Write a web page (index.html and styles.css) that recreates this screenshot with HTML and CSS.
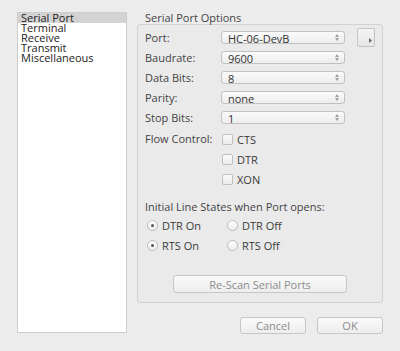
FILE: index.html
```html
<!DOCTYPE html>
<html lang="en">
<head>
    <meta charset="UTF-8">
    <meta name="viewport" content="width=device-width, initial-scale=1.0">
    <link rel="stylesheet" href="styles.css">
    <title>Serial Port Options</title>
</head>
<body>
    <div id="dialog">
        <ul id="pages">
            <li class="selected">Serial Port</li>
            <li>Terminal</li>
            <li>Receive</li>
            <li>Transmit</li>
            <li>Miscellaneous</li>
        </ul>

        <div id="options">
            <div class="title">Serial Port Options</div>
            <div class="group">
                <div class="fields">
                    <label>Port:</label>
                    <div class="select">HC-06-DevB<span class="arrows"></span></div>
                    <button class="tinyBtn"><svg width="3" height="5" viewBox="0 0 3 5"><path d="M0 0 L3 2.5 L0 5 Z" fill="#666"/></svg></button>

                    <label>Baudrate:</label>
                    <div class="select">9600<span class="arrows"></span></div>
                    <span></span>

                    <label>Data Bits:</label>
                    <div class="select">8<span class="arrows"></span></div>
                    <span></span>

                    <label>Parity:</label>
                    <div class="select">none<span class="arrows"></span></div>
                    <span></span>

                    <label>Stop Bits:</label>
                    <div class="select">1<span class="arrows"></span></div>
                    <span></span>
                </div>

                <div class="flow">
                    <label>Flow Control:</label>
                    <div class="checks">
                        <div class="check"><span class="box"></span>CTS</div>
                        <div class="check"><span class="box"></span>DTR</div>
                        <div class="check"><span class="box"></span>XON</div>
                    </div>
                </div>

                <div class="subtitle">Initial Line States when Port opens:</div>
                <div class="radios">
                    <div class="radio"><span class="dot on"></span>DTR On</div>
                    <div class="radio"><span class="dot"></span>DTR Off</div>
                    <div class="radio"><span class="dot on"></span>RTS On</div>
                    <div class="radio"><span class="dot"></span>RTS Off</div>
                </div>

                <div class="rescanRow">
                    <button class="btn" id="rescanBtn">Re-Scan Serial Ports</button>
                </div>
            </div>

            <div id="footer">
                <button class="btn" id="cancelBtn">Cancel</button>
                <button class="btn" id="okBtn">OK</button>
            </div>
        </div>
    </div>
</body>
</html>
```

FILE: styles.css
```css
body{
    margin: 0;
    padding: 0;
    background-color: #ececec;
    font-family: "Open Sans", "DejaVu Sans", sans-serif;
    font-size: 11px;
    color: #3a3a3a;
}

#dialog{
    display: flex;
    gap: 10px;
    width: 400px;
    height: 351px;
    box-sizing: border-box;
    padding: 12px 17px 0 17px;
}

#pages{
    list-style: none;
    margin: 0;
    padding: 0;
    width: 110px;
    height: 321px;
    box-sizing: border-box;
    background-color: white;
    border: 1px solid #cdcdcd;
}

#pages li{
    height: 10px;
    line-height: 10px;
    padding-left: 3px;
    color: #222;
}

#pages .selected{
    background-color: #d3d3d3;
}

#options{
    width: 246px;
}

.title{
    height: 12px;
    line-height: 12px;
    padding-left: 8px;
    color: #444;
}

.group{
    border: 1px solid #d2d2d2;
    border-radius: 3px;
    background-color: #eaeaea;
    padding: 2px 0 9px 7px;
    box-sizing: border-box;
    height: 279px;
}

.fields{
    display: grid;
    grid-template-columns: 76px 124px auto;
    grid-auto-rows: 20px;
    align-items: center;
}

label{
    color: #444;
}

.select{
    position: relative;
    height: 13px;
    line-height: 13px;
    box-sizing: border-box;
    border: 1px solid #c2c2c2;
    border-radius: 3px;
    background: linear-gradient(#fbfbfb, #ededed);
    padding-left: 6px;
    color: #333;
}

.arrows{
    position: absolute;
    right: 5px;
    top: 2px;
    width: 4px;
    height: 7px;
}

.arrows::before, .arrows::after{
    content: "";
    position: absolute;
    left: 0;
    border-left: 2px solid transparent;
    border-right: 2px solid transparent;
}

.arrows::before{
    top: 0;
    border-bottom: 3px solid #a0a0a0;
}

.arrows::after{
    bottom: 0;
    border-top: 3px solid #a0a0a0;
}

.tinyBtn{
    align-self: start;
    margin: 1px 0 0 12px;
    width: 18px;
    height: 19px;
    padding: 0 2px 3px 0;
    border: 1px solid #c4c4c4;
    border-radius: 2px;
    background: linear-gradient(#f4f4f4, #e6e6e6);
    display: flex;
    align-items: flex-end;
    justify-content: flex-end;
}

.flow{
    display: flex;
    margin-top: 2px;
}

.flow label{
    width: 77px;
    height: 20px;
    line-height: 20px;
}

.check{
    display: flex;
    align-items: center;
    height: 20px;
    gap: 4px;
}

.box{
    width: 11px;
    height: 11px;
    box-sizing: border-box;
    border: 1px solid #c0c0c0;
    border-radius: 2px;
    background: linear-gradient(#fafafa, #ececec);
}

.subtitle{
    margin-top: 11px;
    height: 14px;
    line-height: 14px;
    color: #444;
}

.radios{
    display: grid;
    grid-template-columns: 80px auto;
    grid-auto-rows: 20px;
    margin-top: 1px;
    padding-left: 2px;
}

.radio{
    display: flex;
    align-items: center;
    gap: 4px;
}

.dot{
    width: 11px;
    height: 11px;
    box-sizing: border-box;
    border: 1px solid #bcbcbc;
    border-radius: 50%;
    background: linear-gradient(#fdfdfd, #eeeeee);
    display: flex;
    align-items: center;
    justify-content: center;
}

.dot.on::after{
    content: "";
    width: 3px;
    height: 3px;
    border-radius: 50%;
    background-color: #555;
}

.rescanRow{
    display: flex;
    justify-content: center;
    margin-top: 20px;
    margin-left: -7px;
}

.btn{
    font-family: "Open Sans", "DejaVu Sans", sans-serif;
    font-size: 11px;
    color: #8c8c8c;
    border: 1px solid #c6c6c6;
    border-radius: 3px;
    background: linear-gradient(#fafafa, #ededed);
    padding: 0;
}

#rescanBtn{
    width: 174px;
    height: 18px;
}

#footer{
    display: flex;
    justify-content: flex-end;
    gap: 11px;
    margin-top: 14px;
}

#cancelBtn{
    width: 66px;
    height: 17px;
}

#okBtn{
    width: 66px;
    height: 17px;
}
```
